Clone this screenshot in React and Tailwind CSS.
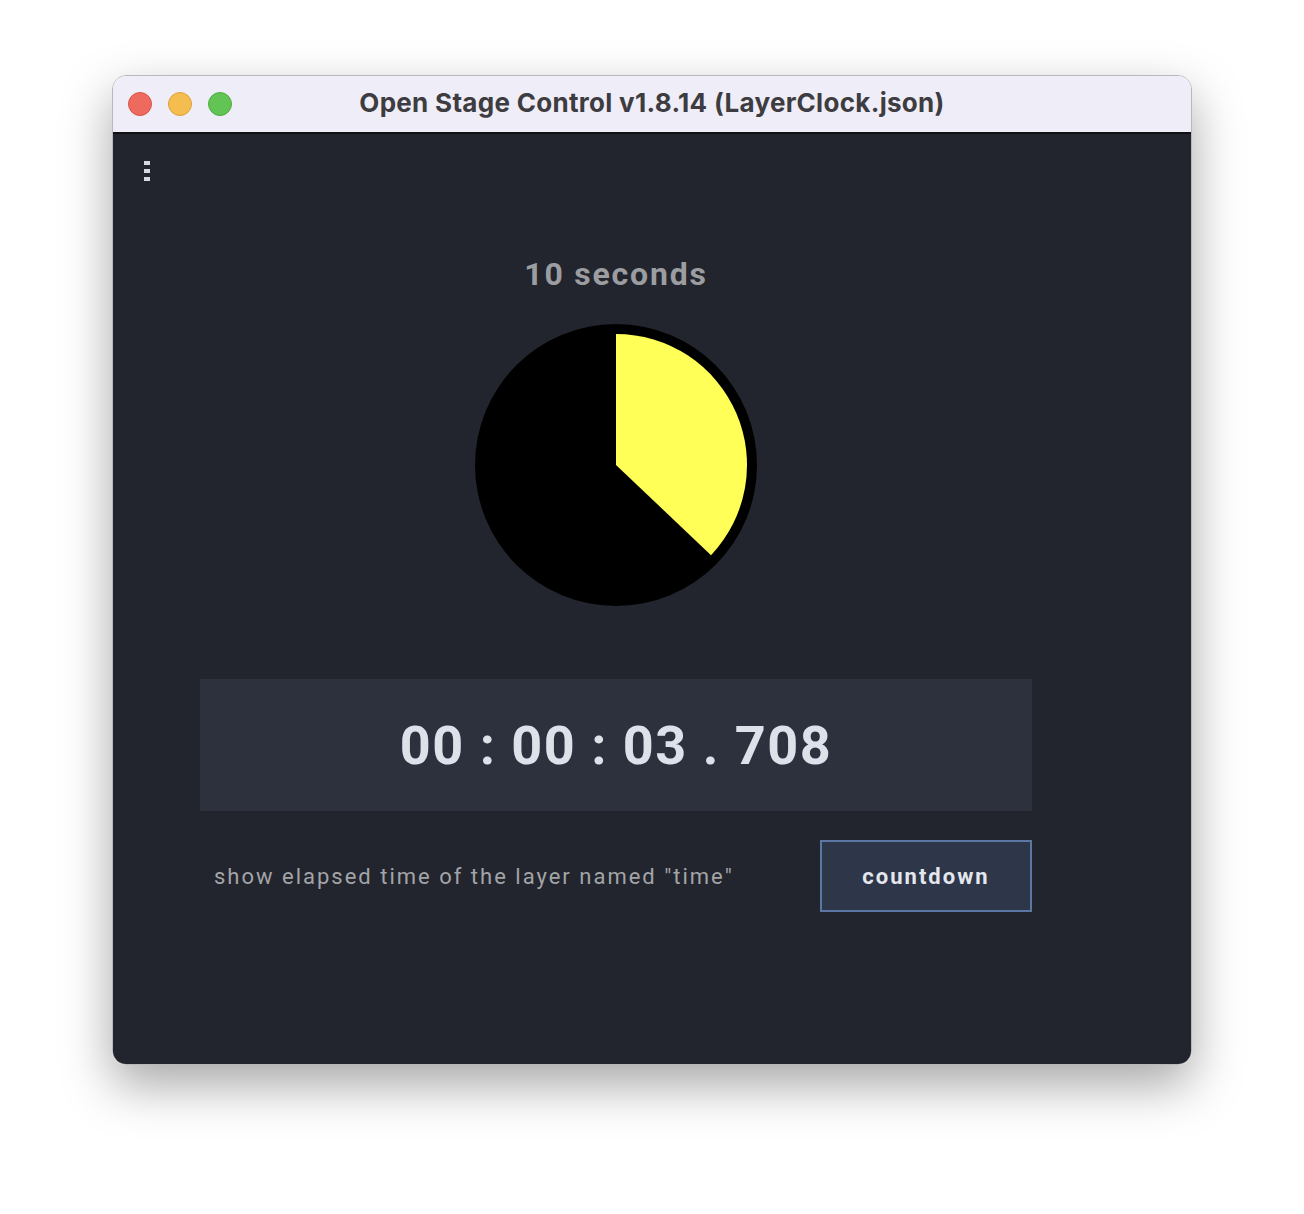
import React from "react";

const progress = 3.708 / 10;

function Pie() {
  const cx = 141;
  const cy = 141;
  const r = 131;
  const a = progress * Math.PI * 2;
  const x = cx + r * Math.sin(a);
  const y = cy - r * Math.cos(a);
  const large = progress > 0.5 ? 1 : 0;
  return (
    <svg width="282" height="282" viewBox="0 0 282 282">
      <circle cx={cx} cy={cy} r="141" fill="#000" />
      <path
        d={`M ${cx} ${cy} L ${cx} ${cy - r} A ${r} ${r} 0 ${large} 1 ${x} ${y} Z`}
        fill="#ffff58"
      />
    </svg>
  );
}

export default function App() {
  return (
    <div className="min-h-[1214px] w-[1304px] bg-white pl-[112px] pt-[75px] font-['Roboto',sans-serif]">
      <div className="flex h-[990px] w-[1080px] flex-col overflow-hidden rounded-[14px] border border-[#b9b9bd] shadow-[0_20px_50px_rgba(0,0,0,0.35)]">
        {/* title bar */}
        <div className="relative flex h-[58px] shrink-0 items-center justify-center border-b-2 border-[#111] bg-[#efedf7] pb-[3px]">
          <div className="absolute left-[15px] top-[16px] flex gap-[16px]">
            <span className="h-[24px] w-[24px] rounded-full border border-[#d9534a] bg-[#ee6a5f]" />
            <span className="h-[24px] w-[24px] rounded-full border border-[#dba23a] bg-[#f5bd4f]" />
            <span className="h-[24px] w-[24px] rounded-full border border-[#4fae3f] bg-[#61c454]" />
          </div>
          <span className="font-['Inter',sans-serif] text-[26px] font-bold tracking-[0.3px] text-[#3d3c40]">
            Open Stage Control v1.8.14 (LayerClock.json)
          </span>
        </div>

        {/* body */}
        <div className="flex flex-1 flex-col bg-[#22252d]">
          <div className="flex flex-col gap-[4px] pl-[31px] pt-[27px]">
            <span className="h-[4px] w-[6px] bg-[#d6d9e2]" />
            <span className="h-[4px] w-[6px] bg-[#d6d9e2]" />
            <span className="h-[4px] w-[6px] bg-[#d6d9e2]" />
          </div>

          <div className="ml-[87px] flex w-[832px] flex-col items-center">
            <div className="mt-[75px] text-[32px] font-bold leading-[36px] tracking-[1.8px] text-[#9c9da1]">
              10 seconds
            </div>
            <div className="mt-[32px]">
              <Pie />
            </div>

            <div className="mt-[73px] flex h-[132px] w-full items-center justify-center bg-[#2c313d]">
              <span className="text-[54px] font-bold tracking-[1.5px] text-[#dde1ea]">
                00 : 00 : 03 . 708
              </span>
            </div>

            <div className="mt-[29px] flex w-full items-center justify-between">
              <span className="pl-[14px] text-[22px] tracking-[2px] text-[#a3a4a8]">
                show elapsed time of the layer named "time"
              </span>
              <button
                type="button"
                className="flex h-[72px] w-[212px] items-center justify-center border-2 border-[#5b78a3] bg-[#2e3649] text-[22px] font-bold tracking-[2px] text-[#e4e7ee]"
              >
                countdown
              </button>
            </div>
          </div>
        </div>
      </div>
    </div>
  );
}
